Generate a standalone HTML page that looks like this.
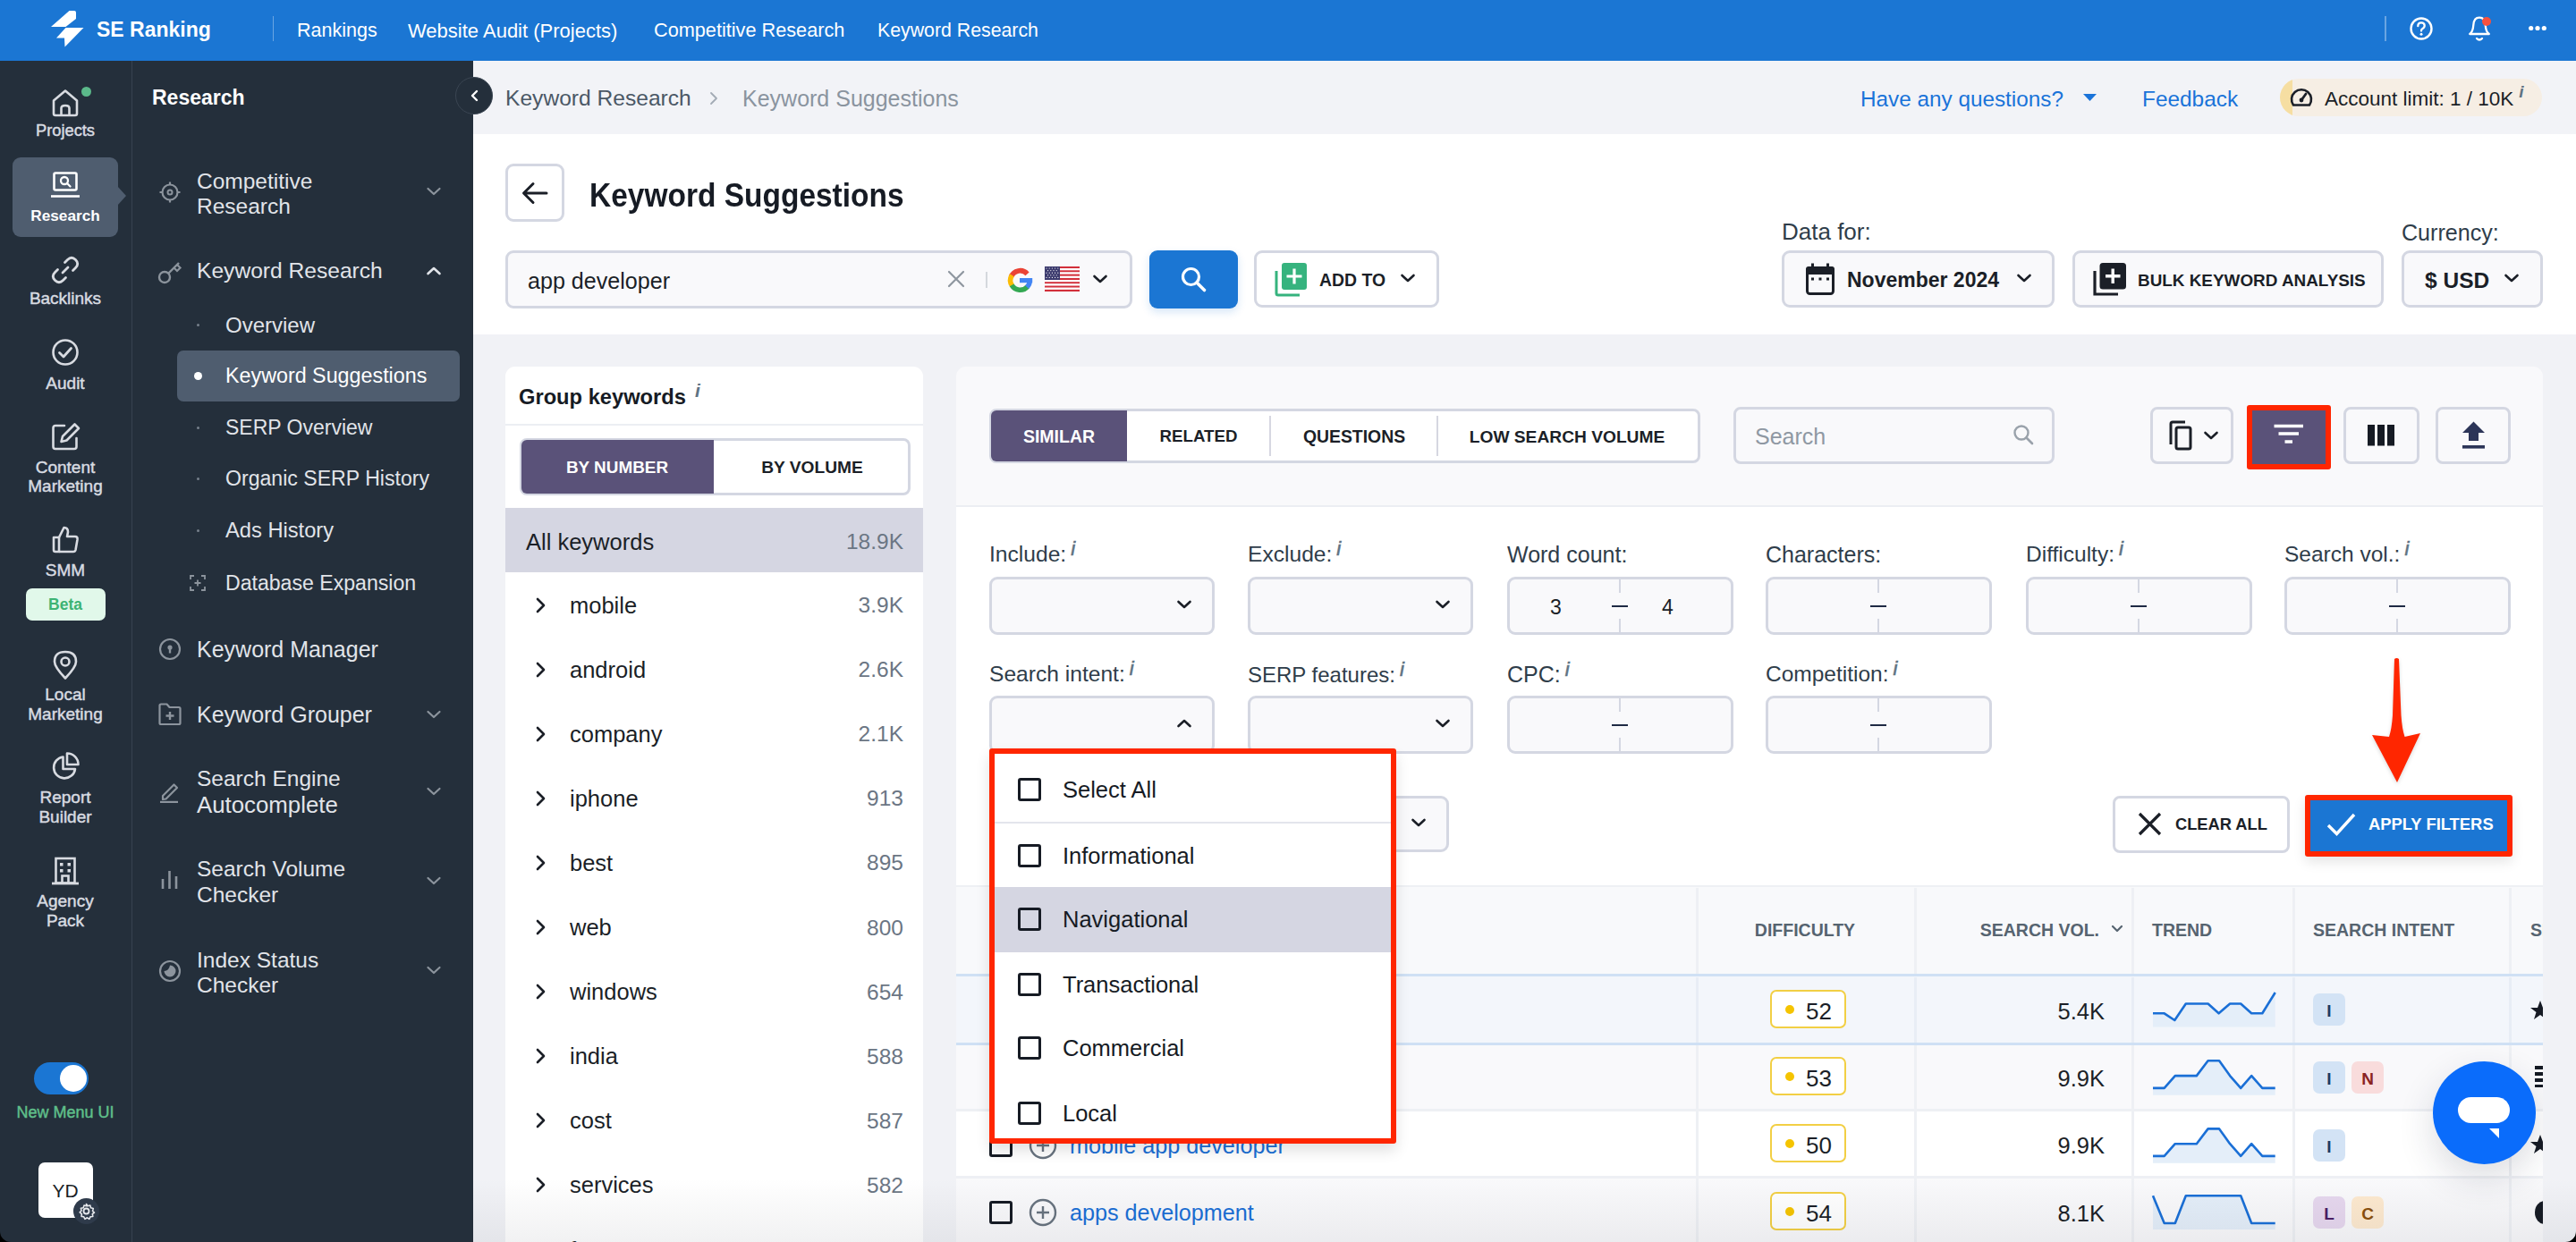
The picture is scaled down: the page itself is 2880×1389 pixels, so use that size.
<!DOCTYPE html>
<html><head><meta charset="utf-8"><title>Keyword Suggestions</title>
<style>
html,body{margin:0;padding:0;}
body{width:2880px;height:1389px;overflow:hidden;position:relative;background:#f1f2f6;font-family:"Liberation Sans", sans-serif;}
.t{position:absolute;white-space:nowrap;font-family:"Liberation Sans", sans-serif;}
.b{position:absolute;box-sizing:border-box;}
</style></head><body>
<div class="b" style="left:0px;top:0px;width:2880px;height:68px;background:#1b76d3;"></div>
<div class="b" style="left:0px;top:68px;width:529px;height:1321px;background:#242f3b;"></div>
<div class="b" style="left:147px;top:68px;width:1px;height:1321px;background:#374250;"></div>
<div class="b" style="left:529px;top:68px;width:2351px;height:82px;background:#f2f3f7;"></div>
<div class="b" style="left:529px;top:150px;width:2351px;height:224px;background:#ffffff;"></div>
<svg class="b" style="left:0px;top:0px;" width="110" height="68" viewBox="0 0 110 68" fill="none"><path d="M77.5 12 L83 12 Q85 12 85 14 L85 21 L73.5 30 L57 30 Z" fill="#fff"/><path d="M73.5 31 L93.5 31 L72.5 52.5 L72 42.5 L63 42.5 Z" fill="#fff"/></svg>
<div class="t" style="left:108px;top:18.0px;font-size:23px;line-height:30px;font-weight:700;color:#ffffff;">SE Ranking</div>
<div class="b" style="left:305px;top:18px;width:1px;height:28px;background:rgba(255,255,255,0.35);"></div>
<div class="t" style="left:332px;top:20.0px;font-size:21.5px;line-height:28px;font-weight:400;color:#ffffff;">Rankings</div>
<div class="t" style="left:456px;top:19.5px;font-size:22px;line-height:29px;font-weight:400;color:#ffffff;">Website Audit (Projects)</div>
<div class="t" style="left:731px;top:20.0px;font-size:21.7px;line-height:28px;font-weight:400;color:#ffffff;">Competitive Research</div>
<div class="t" style="left:981px;top:20.0px;font-size:21.3px;line-height:28px;font-weight:400;color:#ffffff;">Keyword Research</div>
<div class="b" style="left:2666px;top:18px;width:2px;height:28px;background:rgba(255,255,255,0.35);"></div>
<svg class="b" style="left:2691px;top:16px;" width="32" height="32" viewBox="0 0 32 32" fill="none"><circle cx="16" cy="16" r="11.5" stroke="#fff" stroke-width="2.4"/><path d="M12.3 13.2 Q12.3 9.3 16 9.3 Q19.7 9.3 19.7 12.8 Q19.7 15 17.2 16.2 Q16 16.8 16 18.5" stroke="#fff" stroke-width="2.3" stroke-linecap="round"/><circle cx="16" cy="22.3" r="1.5" fill="#fff"/></svg>
<svg class="b" style="left:2754px;top:14px;" width="36" height="36" viewBox="0 0 36 36" fill="none"><path d="M7.2 24 Q10.8 21.5 11.3 14 Q11.8 5.6 18 5.6 Q24.2 5.6 24.7 14 Q25.2 21.5 28.8 24 Z" stroke="#fff" stroke-width="2.3" stroke-linejoin="round"/><path d="M15 29 Q18 32 21 29" stroke="#fff" stroke-width="2.3" stroke-linecap="round"/><circle cx="26" cy="10" r="5" fill="#f6513f"/></svg>
<svg class="b" style="left:2818px;top:24px;" width="36" height="14" viewBox="0 0 36 14" fill="none"><circle cx="11.7" cy="7.5" r="2.6" fill="#fff"/><circle cx="19" cy="7.5" r="2.6" fill="#fff"/><circle cx="26.3" cy="7.5" r="2.6" fill="#fff"/></svg>
<svg class="b" style="left:55px;top:97px;" width="36" height="36" viewBox="0 0 36 36" fill="none"><path d="M5 15.5 L18 4.5 L31 15.5 L31 30 Q31 32 29 32 L7 32 Q5 32 5 30 Z" stroke="#d8dbe1" stroke-width="2.6" stroke-linejoin="round"/><path d="M13.5 32 L13.5 24 Q13.5 21 18 21 Q22.5 21 22.5 24 L22.5 32" stroke="#d8dbe1" stroke-width="2.6"/></svg>
<div class="b" style="left:91px;top:97px;width:11px;height:11px;border-radius:50%;background:#5bb98a;"></div>
<div class="t" style="left:-327px;width:800px;text-align:center;top:134.0px;font-size:18.3px;line-height:24px;font-weight:400;color:#d8dbe1;-webkit-text-stroke:0.45px #d8dbe1;">Projects</div>
<div class="b" style="left:14px;top:176px;width:118px;height:89px;background:#4f5d6f;border-radius:9px;"></div>
<svg class="b" style="left:131px;top:208px;" width="12" height="22" viewBox="0 0 12 22" fill="none"><path d="M0 0 L10 11 L0 22 Z" fill="#4f5d6f"/></svg>
<svg class="b" style="left:55px;top:190px;" width="36" height="36" viewBox="0 0 36 36" fill="none"><rect x="5.5" y="3.5" width="25" height="19" rx="1.5" stroke="#fff" stroke-width="2.6"/><path d="M2 29.5 L34 29.5" stroke="#fff" stroke-width="2.6"/><circle cx="17" cy="12" r="4" stroke="#fff" stroke-width="2.3"/><path d="M20 15 L23.5 18.5" stroke="#fff" stroke-width="2.3" stroke-linecap="round"/></svg>
<div class="t" style="left:-327px;width:800px;text-align:center;top:230.0px;font-size:17.2px;line-height:22px;font-weight:700;color:#ffffff;">Research</div>
<svg class="b" style="left:55px;top:284px;" width="36" height="36" viewBox="0 0 36 36" fill="none"><path d="M15 21 L21 15" stroke="#d8dbe1" stroke-width="2.8" stroke-linecap="round"/><path d="M17.5 9.5 L20.5 6.5 Q25 2 29.5 6.5 Q34 11 29.5 15.5 L26.5 18.5" stroke="#d8dbe1" stroke-width="2.8" stroke-linecap="round"/><path d="M18.5 26.5 L15.5 29.5 Q11 34 6.5 29.5 Q2 25 6.5 20.5 L9.5 17.5" stroke="#d8dbe1" stroke-width="2.8" stroke-linecap="round"/></svg>
<div class="t" style="left:-327px;width:800px;text-align:center;top:320.5px;font-size:19px;line-height:25px;font-weight:400;color:#d8dbe1;-webkit-text-stroke:0.45px #d8dbe1;">Backlinks</div>
<svg class="b" style="left:55px;top:376px;" width="36" height="36" viewBox="0 0 36 36" fill="none"><circle cx="18" cy="18" r="13.5" stroke="#d8dbe1" stroke-width="2.6"/><path d="M11.5 18.5 L16 23 L24.5 13.5" stroke="#d8dbe1" stroke-width="2.8" stroke-linecap="round" stroke-linejoin="round"/></svg>
<div class="t" style="left:-327px;width:800px;text-align:center;top:415.5px;font-size:19px;line-height:25px;font-weight:400;color:#d8dbe1;-webkit-text-stroke:0.45px #d8dbe1;">Audit</div>
<svg class="b" style="left:55px;top:471px;" width="36" height="36" viewBox="0 0 36 36" fill="none"><path d="M17 5 L7 5 Q4.5 5 4.5 7.5 L4.5 28.5 Q4.5 31 7 31 L28 31 Q30.5 31 30.5 28.5 L30.5 19" stroke="#d8dbe1" stroke-width="2.6" stroke-linecap="round"/><path d="M28.5 3.5 L33 8 L19.5 21.5 L13.5 23 L15 17 Z" stroke="#d8dbe1" stroke-width="2.6" stroke-linejoin="round"/></svg>
<div class="t" style="left:-327px;width:800px;text-align:center;top:509.5px;font-size:19px;line-height:25px;font-weight:400;color:#d8dbe1;-webkit-text-stroke:0.45px #d8dbe1;">Content</div>
<div class="t" style="left:-327px;width:800px;text-align:center;top:530.5px;font-size:19px;line-height:25px;font-weight:400;color:#d8dbe1;-webkit-text-stroke:0.45px #d8dbe1;">Marketing</div>
<svg class="b" style="left:55px;top:586px;" width="36" height="36" viewBox="0 0 36 36" fill="none"><path d="M5 15 L11 15 L11 31 L7 31 Q5 31 5 29 Z" stroke="#d8dbe1" stroke-width="2.6" stroke-linejoin="round"/><path d="M11 15 L16.5 4 Q21 4 21 9 L20 14 L29 14 Q32 14 31.5 17.5 L29.5 29 Q29 31 27 31 L11 31" stroke="#d8dbe1" stroke-width="2.6" stroke-linejoin="round"/></svg>
<div class="t" style="left:-327px;width:800px;text-align:center;top:624.5px;font-size:19px;line-height:25px;font-weight:400;color:#d8dbe1;-webkit-text-stroke:0.45px #d8dbe1;">SMM</div>
<div class="b" style="left:29px;top:658px;width:89px;height:36px;background:#e1f8ea;border-radius:7px;"></div>
<div class="t" style="left:-327px;width:800px;text-align:center;top:664.5px;font-size:17.5px;line-height:23px;font-weight:700;color:#3db374;">Beta</div>
<svg class="b" style="left:55px;top:726px;" width="36" height="36" viewBox="0 0 36 36" fill="none"><path d="M18 32.5 Q6 20 6 14 Q6 3 18 3 Q30 3 30 14 Q30 20 18 32.5 Z" stroke="#d8dbe1" stroke-width="2.6" stroke-linejoin="round"/><circle cx="18" cy="14" r="4.5" stroke="#d8dbe1" stroke-width="2.6"/></svg>
<div class="t" style="left:-327px;width:800px;text-align:center;top:763.5px;font-size:19px;line-height:25px;font-weight:400;color:#d8dbe1;-webkit-text-stroke:0.45px #d8dbe1;">Local</div>
<div class="t" style="left:-327px;width:800px;text-align:center;top:785.5px;font-size:19px;line-height:25px;font-weight:400;color:#d8dbe1;-webkit-text-stroke:0.45px #d8dbe1;">Marketing</div>
<svg class="b" style="left:55px;top:840px;" width="36" height="36" viewBox="0 0 36 36" fill="none"><path d="M15.5 6.5 A12 12 0 1 0 29 20 L15.5 20 Z" stroke="#d8dbe1" stroke-width="2.6" stroke-linejoin="round"/><path d="M20 2.5 A12.5 12.5 0 0 1 32.5 15 L20 15 Z" stroke="#d8dbe1" stroke-width="2.6" stroke-linejoin="round"/></svg>
<div class="t" style="left:-327px;width:800px;text-align:center;top:878.5px;font-size:19px;line-height:25px;font-weight:400;color:#d8dbe1;-webkit-text-stroke:0.45px #d8dbe1;">Report</div>
<div class="t" style="left:-327px;width:800px;text-align:center;top:900.5px;font-size:19px;line-height:25px;font-weight:400;color:#d8dbe1;-webkit-text-stroke:0.45px #d8dbe1;">Builder</div>
<svg class="b" style="left:55px;top:957px;" width="36" height="36" viewBox="0 0 36 36" fill="none"><rect x="7.5" y="3" width="21" height="27.5" stroke="#d8dbe1" stroke-width="2.6"/><path d="M3 31 L33 31" stroke="#d8dbe1" stroke-width="2.8"/><rect x="12" y="8" width="3.5" height="3.5" fill="#d8dbe1"/><rect x="20.5" y="8" width="3.5" height="3.5" fill="#d8dbe1"/><rect x="12" y="15" width="3.5" height="3.5" fill="#d8dbe1"/><rect x="20.5" y="15" width="3.5" height="3.5" fill="#d8dbe1"/><path d="M14.5 31 L14.5 22.5 L21.5 22.5 L21.5 31" stroke="#d8dbe1" stroke-width="2.6"/></svg>
<div class="t" style="left:-327px;width:800px;text-align:center;top:994.5px;font-size:19px;line-height:25px;font-weight:400;color:#d8dbe1;-webkit-text-stroke:0.45px #d8dbe1;">Agency</div>
<div class="t" style="left:-327px;width:800px;text-align:center;top:1016.5px;font-size:19px;line-height:25px;font-weight:400;color:#d8dbe1;-webkit-text-stroke:0.45px #d8dbe1;">Pack</div>
<div class="b" style="left:38px;top:1188px;width:61px;height:36px;background:#1b76d3;border-radius:18px;"></div>
<div class="b" style="left:67px;top:1191px;width:30px;height:30px;border-radius:50%;background:#fff;"></div>
<div class="t" style="left:-327px;width:800px;text-align:center;top:1232.5px;font-size:18px;line-height:23px;font-weight:400;color:#5fbf8a;-webkit-text-stroke:0.45px #5fbf8a;">New Menu UI</div>
<div class="b" style="left:43px;top:1300px;width:61px;height:62px;background:#fff;border-radius:7px;"></div>
<div class="t" style="left:-327px;width:800px;text-align:center;top:1317.5px;font-size:21px;line-height:27px;font-weight:400;color:#1b1f27;">YD</div>
<div class="b" style="left:82px;top:1340px;width:29px;height:29px;border-radius:50%;background:#2f3b4b;"></div>
<svg class="b" style="left:86px;top:1344px;" width="21" height="21" viewBox="0 0 21 21" fill="none"><circle cx="10.5" cy="10.5" r="3" stroke="#e6e8ec" stroke-width="1.8"/><path d="M10.5 2.5 L12 4.8 L14.8 4 L15.5 6.8 L18.3 7.5 L17.5 10.3 L19.5 12 L17.3 13.7 L17.8 16.5 L15 16.8 L13.8 19.3 L11.5 17.8 L9 19.3 L7.7 16.8 L5 16.4 L5.4 13.6 L3.2 11.8 L5 10 L4.4 7.3 L7.2 6.7 L8 4 L10.7 4.7 Z" stroke="#e6e8ec" stroke-width="1.6" stroke-linejoin="round"/></svg>
<div class="t" style="left:170px;top:94.0px;font-size:23px;line-height:30px;font-weight:700;color:#ffffff;">Research</div>
<div class="b" style="left:509px;top:86px;width:42px;height:42px;border-radius:50%;background:#242f3b;border:1px solid #3a4552;"></div>
<svg class="b" style="left:521px;top:97px;" width="20" height="20" viewBox="0 0 20 20" fill="none"><path d="M12 5 L7 10 L12 15" stroke="#fff" stroke-width="2.4" stroke-linecap="round" stroke-linejoin="round"/></svg>
<svg class="b" style="left:177px;top:202px;" width="26" height="26" viewBox="0 0 26 26" fill="none"><circle cx="13" cy="13" r="8.5" stroke="#8c949d" stroke-width="2.2"/><circle cx="13" cy="13" r="2.5" stroke="#8c949d" stroke-width="2"/><path d="M13 1.5 L13 4.5 M13 21.5 L13 24.5 M1.5 13 L4.5 13 M21.5 13 L24.5 13" stroke="#8c949d" stroke-width="2.2"/></svg>
<div class="t" style="left:220px;top:187.0px;font-size:24.5px;line-height:32px;font-weight:400;color:#e1e4e9;">Competitive</div>
<div class="t" style="left:220px;top:215.0px;font-size:24.5px;line-height:32px;font-weight:400;color:#e1e4e9;">Research</div>
<svg class="b" style="left:476px;top:208px;" width="18" height="12" viewBox="0 0 18 12" fill="none"><path d="M2.5 3 L9 9 L15.5 3" stroke="#8c949d" stroke-width="2.2" stroke-linecap="round" stroke-linejoin="round"/></svg>
<svg class="b" style="left:175px;top:289px;" width="30" height="30" viewBox="0 0 30 30" fill="none"><circle cx="9" cy="21" r="6" stroke="#8c949d" stroke-width="2.4"/><path d="M13.5 16.5 L25 5" stroke="#8c949d" stroke-width="2.4"/><path d="M19.5 10.5 L23 14 L26.5 10.5 L23 7" stroke="#8c949d" stroke-width="2.2"/></svg>
<div class="t" style="left:220px;top:287.0px;font-size:24.6px;line-height:32px;font-weight:400;color:#e1e4e9;">Keyword Research</div>
<svg class="b" style="left:476px;top:297px;" width="18" height="12" viewBox="0 0 18 12" fill="none"><path d="M2.5 9 L9 3 L15.5 9" stroke="#e1e4e9" stroke-width="2.6" stroke-linecap="round" stroke-linejoin="round"/></svg>
<div class="b" style="left:220px;top:361.5px;width:3px;height:3px;border-radius:50%;background:#77818c;"></div>
<div class="t" style="left:252px;top:347.5px;font-size:24px;line-height:31px;font-weight:400;color:#e1e4e9;">Overview</div>
<div class="b" style="left:220px;top:476.5px;width:3px;height:3px;border-radius:50%;background:#77818c;"></div>
<div class="t" style="left:252px;top:463.0px;font-size:23px;line-height:30px;font-weight:400;color:#e1e4e9;">SERP Overview</div>
<div class="b" style="left:220px;top:533.5px;width:3px;height:3px;border-radius:50%;background:#77818c;"></div>
<div class="t" style="left:252px;top:520.0px;font-size:23.1px;line-height:30px;font-weight:400;color:#e1e4e9;">Organic SERP History</div>
<div class="b" style="left:220px;top:591.5px;width:3px;height:3px;border-radius:50%;background:#77818c;"></div>
<div class="t" style="left:252px;top:577.5px;font-size:23.7px;line-height:31px;font-weight:400;color:#e1e4e9;">Ads History</div>
<div class="b" style="left:198px;top:392px;width:316px;height:57px;background:#4f5d6f;border-radius:7px;"></div>
<div class="b" style="left:217px;top:416px;width:9px;height:9px;border-radius:50%;background:#fff;"></div>
<div class="t" style="left:252px;top:405.0px;font-size:23.3px;line-height:30px;font-weight:400;color:#ffffff;">Keyword Suggestions</div>
<svg class="b" style="left:211px;top:642px;" width="20" height="20" viewBox="0 0 20 20" fill="none"><path d="M2 6 L2 2 L6 2 M14 2 L18 2 L18 6 M18 14 L18 18 L14 18 M6 18 L2 18 L2 14" stroke="#8c949d" stroke-width="1.8"/><path d="M10 6.5 L10 13.5 M6.5 10 L13.5 10" stroke="#8c949d" stroke-width="1.8"/></svg>
<div class="t" style="left:252px;top:637.0px;font-size:23.1px;line-height:30px;font-weight:400;color:#e1e4e9;">Database Expansion</div>
<svg class="b" style="left:177px;top:713px;" width="26" height="26" viewBox="0 0 26 26" fill="none"><circle cx="13" cy="13" r="11" stroke="#8c949d" stroke-width="2.2"/><circle cx="13" cy="11" r="2.6" fill="#8c949d"/><path d="M13 11 L13 17.5" stroke="#8c949d" stroke-width="2.4"/></svg>
<div class="t" style="left:220px;top:710.0px;font-size:25px;line-height:32px;font-weight:400;color:#e1e4e9;">Keyword Manager</div>
<svg class="b" style="left:176px;top:785px;" width="28" height="28" viewBox="0 0 28 28" fill="none"><path d="M2.5 4 Q2.5 2.5 4 2.5 L10.5 2.5 L13.5 6 L24 6 Q25.5 6 25.5 7.5 L25.5 23.5 Q25.5 25 24 25 L4 25 Q2.5 25 2.5 23.5 Z" stroke="#8c949d" stroke-width="2.2" stroke-linejoin="round"/><path d="M14 11 L14 20 M9.5 15.5 L18.5 15.5" stroke="#8c949d" stroke-width="2.4"/></svg>
<div class="t" style="left:220px;top:783.0px;font-size:25px;line-height:32px;font-weight:400;color:#e1e4e9;">Keyword Grouper</div>
<svg class="b" style="left:476px;top:793px;" width="18" height="12" viewBox="0 0 18 12" fill="none"><path d="M2.5 3 L9 9 L15.5 3" stroke="#8c949d" stroke-width="2.2" stroke-linecap="round" stroke-linejoin="round"/></svg>
<svg class="b" style="left:177px;top:872px;" width="26" height="26" viewBox="0 0 26 26" fill="none"><path d="M5 18 L17.5 5.5 L21 9 L8.5 21.5 L5 22 Z" stroke="#8c949d" stroke-width="2.2" stroke-linejoin="round"/><path d="M2 25 L22 25" stroke="#8c949d" stroke-width="2.4"/></svg>
<div class="t" style="left:220px;top:855.0px;font-size:24.5px;line-height:32px;font-weight:400;color:#e1e4e9;">Search Engine</div>
<div class="t" style="left:220px;top:883.0px;font-size:25.8px;line-height:34px;font-weight:400;color:#e1e4e9;">Autocomplete</div>
<svg class="b" style="left:476px;top:879px;" width="18" height="12" viewBox="0 0 18 12" fill="none"><path d="M2.5 3 L9 9 L15.5 3" stroke="#8c949d" stroke-width="2.2" stroke-linecap="round" stroke-linejoin="round"/></svg>
<svg class="b" style="left:178px;top:972px;" width="24" height="26" viewBox="0 0 24 26" fill="none"><path d="M4 11 L4 22 M11.5 2 L11.5 22 M19 8 L19 22" stroke="#8c949d" stroke-width="2.6"/></svg>
<div class="t" style="left:220px;top:956.0px;font-size:24.5px;line-height:32px;font-weight:400;color:#e1e4e9;">Search Volume</div>
<div class="t" style="left:220px;top:985.0px;font-size:24.5px;line-height:32px;font-weight:400;color:#e1e4e9;">Checker</div>
<svg class="b" style="left:476px;top:979px;" width="18" height="12" viewBox="0 0 18 12" fill="none"><path d="M2.5 3 L9 9 L15.5 3" stroke="#8c949d" stroke-width="2.2" stroke-linecap="round" stroke-linejoin="round"/></svg>
<svg class="b" style="left:177px;top:1073px;" width="26" height="26" viewBox="0 0 26 26" fill="none"><circle cx="13" cy="13" r="11" stroke="#8c949d" stroke-width="2.2"/><path d="M13 6.5 A6.5 6.5 0 1 1 6.5 13 Q12 12.5 13 6.5 Z" fill="#8c949d"/></svg>
<div class="t" style="left:220px;top:1058.0px;font-size:24.5px;line-height:32px;font-weight:400;color:#e1e4e9;">Index Status</div>
<div class="t" style="left:220px;top:1086.0px;font-size:24.5px;line-height:32px;font-weight:400;color:#e1e4e9;">Checker</div>
<svg class="b" style="left:476px;top:1079px;" width="18" height="12" viewBox="0 0 18 12" fill="none"><path d="M2.5 3 L9 9 L15.5 3" stroke="#8c949d" stroke-width="2.2" stroke-linecap="round" stroke-linejoin="round"/></svg>
<div class="t" style="left:565px;top:94.0px;font-size:24.6px;line-height:32px;font-weight:400;color:#4b5866;">Keyword Research</div>
<svg class="b" style="left:790px;top:100px;" width="16" height="20" viewBox="0 0 16 20" fill="none"><path d="M5 4 L11 10 L5 16" stroke="#a3abb5" stroke-width="1.8" stroke-linecap="round" stroke-linejoin="round"/></svg>
<div class="t" style="left:830px;top:94.0px;font-size:25px;line-height:32px;font-weight:400;color:#8a949f;">Keyword Suggestions</div>
<div class="t" style="left:2080px;top:95.0px;font-size:24.3px;line-height:32px;font-weight:400;color:#1a73d9;">Have any questions?</div>
<svg class="b" style="left:2327px;top:103px;" width="20" height="12" viewBox="0 0 20 12" fill="none"><path d="M2 2 L17 2 L9.5 10 Z" fill="#1a73d9"/></svg>
<div class="t" style="left:2395px;top:95.0px;font-size:24.4px;line-height:32px;font-weight:400;color:#1a73d9;">Feedback</div>
<div class="b" style="left:2549px;top:88px;width:293px;height:42px;background:#f6eee4;border-radius:21px;overflow:hidden;"></div>
<div class="b" style="left:2549px;top:88px;width:42px;height:42px;border-radius:21px 0 0 21px;clip-path:inset(0 28px 0 0);background:#f6dea2;"></div>
<svg class="b" style="left:2558px;top:93px;" width="30" height="30" viewBox="0 0 30 30" fill="none"><path d="M6 24.5 A11 11 0 1 1 24 24.5 Z" stroke="#1b1f27" stroke-width="2.6" stroke-linejoin="round"/><path d="M15 19 L20 12" stroke="#1b1f27" stroke-width="2.8" stroke-linecap="round"/><circle cx="15" cy="19" r="2.4" fill="#1b1f27"/></svg>
<div class="t" style="left:2599px;top:95.5px;font-size:22.5px;line-height:29px;font-weight:400;color:#1b1f27;">Account limit: 1 / 10K<span style="font-style:italic;font-weight:700;color:#5f7383;font-size:19px;position:relative;top:-9px;margin-left:6px;">i</span></div>
<div class="b" style="left:565px;top:183px;width:66px;height:65px;border:3px solid #d4d7e2;border-radius:9px;background:#fff;"></div>
<svg class="b" style="left:581px;top:199px;" width="34" height="34" viewBox="0 0 34 34" fill="none"><path d="M30 17 L5 17 M15 6.5 L4.5 17 L15 27.5" stroke="#1b1f27" stroke-width="3" stroke-linecap="round" stroke-linejoin="round"/></svg>
<div class="t" style="left:659px;top:194.5px;font-size:36px;line-height:47px;font-weight:700;color:#161b24;transform:scaleX(0.93);transform-origin:0 50%;">Keyword Suggestions</div>
<div class="b" style="left:565px;top:280px;width:701px;height:65px;border:3px solid #d4d7e2;border-radius:9px;background:#f9f9fb;"></div>
<div class="t" style="left:590px;top:297.5px;font-size:25.1px;line-height:33px;font-weight:400;color:#1b1f27;">app developer</div>
<svg class="b" style="left:1058px;top:301px;" width="22" height="22" viewBox="0 0 22 22" fill="none"><path d="M3 3 L19 19 M19 3 L3 19" stroke="#8e969f" stroke-width="2.2" stroke-linecap="round"/></svg>
<div class="b" style="left:1102px;top:304px;width:2px;height:18px;background:#d5d8dd;"></div>
<svg class="b" style="left:1124px;top:297px;" width="33" height="33" viewBox="0 0 33 33" fill="none"><path d="M6.35 12.81 A10.8 10.8 0 0 1 24.53 9.27" stroke="#ea4335" stroke-width="5.6"/><path d="M7.65 22.69 A10.8 10.8 0 0 1 7.34 10.78" stroke="#fbbc05" stroke-width="5.6"/><path d="M24.77 23.44 A10.8 10.8 0 0 1 7.15 21.90" stroke="#34a853" stroke-width="5.6"/><path d="M27.30 16.50 A10.8 10.8 0 0 1 24.14 24.14" stroke="#4285f4" stroke-width="5.6"/><rect x="16" y="14" width="14.2" height="5.2" fill="#4285f4"/></svg>
<svg class="b" style="left:1168px;top:298px;" width="39" height="28" viewBox="0 0 39 28" fill="none"><rect x="0" y="0.00" width="39" height="2.20" fill="#d22f3a"/><rect x="0" y="2.15" width="39" height="2.20" fill="#fff"/><rect x="0" y="4.31" width="39" height="2.20" fill="#d22f3a"/><rect x="0" y="6.46" width="39" height="2.20" fill="#fff"/><rect x="0" y="8.62" width="39" height="2.20" fill="#d22f3a"/><rect x="0" y="10.77" width="39" height="2.20" fill="#fff"/><rect x="0" y="12.92" width="39" height="2.20" fill="#d22f3a"/><rect x="0" y="15.08" width="39" height="2.20" fill="#fff"/><rect x="0" y="17.23" width="39" height="2.20" fill="#d22f3a"/><rect x="0" y="19.38" width="39" height="2.20" fill="#fff"/><rect x="0" y="21.54" width="39" height="2.20" fill="#d22f3a"/><rect x="0" y="23.69" width="39" height="2.20" fill="#fff"/><rect x="0" y="25.85" width="39" height="2.20" fill="#d22f3a"/><rect x="0" y="0" width="17" height="15" fill="#3c3b6e"/><circle cx="2.0" cy="2.0" r="0.6" fill="#fff"/><circle cx="5.2" cy="2.0" r="0.6" fill="#fff"/><circle cx="8.4" cy="2.0" r="0.6" fill="#fff"/><circle cx="11.6" cy="2.0" r="0.6" fill="#fff"/><circle cx="14.8" cy="2.0" r="0.6" fill="#fff"/><circle cx="3.6" cy="4.6" r="0.6" fill="#fff"/><circle cx="6.8" cy="4.6" r="0.6" fill="#fff"/><circle cx="10.0" cy="4.6" r="0.6" fill="#fff"/><circle cx="13.2" cy="4.6" r="0.6" fill="#fff"/><circle cx="2.0" cy="7.2" r="0.6" fill="#fff"/><circle cx="5.2" cy="7.2" r="0.6" fill="#fff"/><circle cx="8.4" cy="7.2" r="0.6" fill="#fff"/><circle cx="11.6" cy="7.2" r="0.6" fill="#fff"/><circle cx="14.8" cy="7.2" r="0.6" fill="#fff"/><circle cx="3.6" cy="9.8" r="0.6" fill="#fff"/><circle cx="6.8" cy="9.8" r="0.6" fill="#fff"/><circle cx="10.0" cy="9.8" r="0.6" fill="#fff"/><circle cx="13.2" cy="9.8" r="0.6" fill="#fff"/><circle cx="2.0" cy="12.4" r="0.6" fill="#fff"/><circle cx="5.2" cy="12.4" r="0.6" fill="#fff"/><circle cx="8.4" cy="12.4" r="0.6" fill="#fff"/><circle cx="11.6" cy="12.4" r="0.6" fill="#fff"/><circle cx="14.8" cy="12.4" r="0.6" fill="#fff"/></svg>
<svg class="b" style="left:1221px;top:306px;" width="18" height="12" viewBox="0 0 18 12" fill="none"><path d="M2.5 3 L9 9 L15.5 3" stroke="#1b1f27" stroke-width="2.6" stroke-linecap="round" stroke-linejoin="round"/></svg>
<div class="b" style="left:1285px;top:280px;width:99px;height:65px;background:#1b76d3;border-radius:9px;box-shadow:0 4px 10px rgba(27,118,211,0.18);"></div>
<svg class="b" style="left:1317px;top:295px;" width="36" height="36" viewBox="0 0 36 36" fill="none"><circle cx="14.5" cy="14.5" r="9" stroke="#fff" stroke-width="3.2"/><path d="M21 21 L29.5 29.5" stroke="#fff" stroke-width="3.6" stroke-linecap="round"/></svg>
<div class="b" style="left:1402px;top:280px;width:207px;height:64px;border:3px solid #d4d7e2;border-radius:9px;background:#fff;"></div>
<svg class="b" style="left:1424px;top:291px;" width="40" height="42" viewBox="0 0 40 42" fill="none"><path d="M3 12 L3 37 Q3 39 5 39 L29 39" stroke="#36b37e" stroke-width="3"/><rect x="9" y="3" width="28" height="30" rx="3" fill="#36b37e"/><path d="M23 9.5 L23 26.5 M14.5 18 L31.5 18" stroke="#fff" stroke-width="3.2"/></svg>
<div class="t" style="left:1475px;top:300.5px;font-size:19.4px;line-height:25px;font-weight:700;color:#1b1f27;">ADD TO</div>
<svg class="b" style="left:1565px;top:305px;" width="18" height="12" viewBox="0 0 18 12" fill="none"><path d="M2.5 3 L9 9 L15.5 3" stroke="#1b1f27" stroke-width="2.6" stroke-linecap="round" stroke-linejoin="round"/></svg>
<div class="t" style="left:1992px;top:242.0px;font-size:26px;line-height:34px;font-weight:400;color:#2f3d4a;">Data for:</div>
<div class="b" style="left:1992px;top:280px;width:305px;height:64px;border:3px solid #d4d7e2;border-radius:9px;background:#f9f9fb;"></div>
<svg class="b" style="left:2015px;top:293px;" width="38" height="38" viewBox="0 0 38 38" fill="none"><rect x="5.5" y="6.5" width="29" height="29" rx="3" stroke="#1b1f27" stroke-width="3"/><path d="M4 14 L4 8 Q4 5 7 5 L33 5 Q36 5 36 8 L36 14 Z" fill="#1b1f27"/><rect x="10" y="1.5" width="3" height="5" fill="#1b1f27"/><rect x="27" y="1.5" width="3" height="5" fill="#1b1f27"/><rect x="10" y="17.5" width="3" height="3" fill="#1b1f27"/><rect x="18.5" y="17.5" width="3" height="3" fill="#1b1f27"/><rect x="27" y="17.5" width="3" height="3" fill="#1b1f27"/></svg>
<div class="t" style="left:2065px;top:298.0px;font-size:23px;line-height:30px;font-weight:700;color:#1b1f27;">November 2024</div>
<svg class="b" style="left:2254px;top:305px;" width="18" height="12" viewBox="0 0 18 12" fill="none"><path d="M2.5 3 L9 9 L15.5 3" stroke="#1b1f27" stroke-width="2.6" stroke-linecap="round" stroke-linejoin="round"/></svg>
<div class="b" style="left:2317px;top:280px;width:348px;height:64px;border:3px solid #d4d7e2;border-radius:9px;background:#f9f9fb;"></div>
<svg class="b" style="left:2339px;top:292px;" width="40" height="40" viewBox="0 0 40 40" fill="none"><path d="M3 11 L3 37 L29 37" stroke="#1b1f27" stroke-width="3.2"/><rect x="8.5" y="2" width="29.5" height="29.5" rx="3.5" fill="#1b1f27"/><path d="M23.2 8.5 L23.2 25 M15 16.7 L31.5 16.7" stroke="#fff" stroke-width="3.4"/></svg>
<div class="t" style="left:2390px;top:300.5px;font-size:18.9px;line-height:25px;font-weight:700;color:#1b1f27;">BULK KEYWORD ANALYSIS</div>
<div class="t" style="left:2685px;top:243.5px;font-size:25.1px;line-height:33px;font-weight:400;color:#2f3d4a;">Currency:</div>
<div class="b" style="left:2685px;top:280px;width:158px;height:64px;border:3px solid #d4d7e2;border-radius:9px;background:#f9f9fb;"></div>
<div class="t" style="left:2711px;top:298.0px;font-size:24.5px;line-height:32px;font-weight:700;color:#1b1f27;">$ USD</div>
<svg class="b" style="left:2799px;top:305px;" width="18" height="12" viewBox="0 0 18 12" fill="none"><path d="M2.5 3 L9 9 L15.5 3" stroke="#1b1f27" stroke-width="2.6" stroke-linecap="round" stroke-linejoin="round"/></svg>
<div class="b" style="left:565px;top:410px;width:467px;height:990px;background:#fff;border-radius:11px 11px 0 0;"></div>
<div class="t" style="left:580px;top:428.5px;font-size:23.7px;line-height:31px;font-weight:700;color:#161b24;">Group keywords</div>
<div class="t" style="left:777px;top:422.5px;font-size:21px;line-height:27px;font-weight:700;color:#5f7383;font-style:italic;">i</div>
<div class="b" style="left:565px;top:474px;width:467px;height:2px;background:#eceef3;"></div>
<div class="b" style="left:581px;top:490px;width:437px;height:64px;border:3px solid #d4d7e2;border-radius:8px;background:#fff;"></div>
<div class="b" style="left:583px;top:492px;width:215px;height:60px;background:#5a5279;border-radius:6px 0 0 6px;"></div>
<div class="t" style="left:290px;width:800px;text-align:center;top:509.5px;font-size:18.9px;line-height:25px;font-weight:700;color:#ffffff;">BY NUMBER</div>
<div class="t" style="left:508px;width:800px;text-align:center;top:509.5px;font-size:19.2px;line-height:25px;font-weight:700;color:#1b1f27;">BY VOLUME</div>
<div class="b" style="left:565px;top:568px;width:467px;height:72px;background:#d5d6e2;"></div>
<div class="t" style="left:588px;top:589.5px;font-size:25.5px;line-height:33px;font-weight:400;color:#1b1f27;">All keywords</div>
<div class="t" style="right:1870px;top:590.0px;font-size:24.5px;line-height:32px;font-weight:400;color:#6b7684;">18.9K</div>
<svg class="b" style="left:596px;top:667px;" width="18" height="20" viewBox="0 0 18 20" fill="none"><path d="M5 3 L12 10 L5 17" stroke="#1b1f27" stroke-width="2.6" stroke-linecap="round" stroke-linejoin="round"/></svg>
<div class="t" style="left:637px;top:660.5px;font-size:25.5px;line-height:33px;font-weight:400;color:#1b1f27;">mobile</div>
<div class="t" style="right:1870px;top:661.0px;font-size:24.5px;line-height:32px;font-weight:400;color:#6b7684;">3.9K</div>
<svg class="b" style="left:596px;top:739px;" width="18" height="20" viewBox="0 0 18 20" fill="none"><path d="M5 3 L12 10 L5 17" stroke="#1b1f27" stroke-width="2.6" stroke-linecap="round" stroke-linejoin="round"/></svg>
<div class="t" style="left:637px;top:732.6px;font-size:25.5px;line-height:33px;font-weight:400;color:#1b1f27;">android</div>
<div class="t" style="right:1870px;top:733.1px;font-size:24.5px;line-height:32px;font-weight:400;color:#6b7684;">2.6K</div>
<svg class="b" style="left:596px;top:811px;" width="18" height="20" viewBox="0 0 18 20" fill="none"><path d="M5 3 L12 10 L5 17" stroke="#1b1f27" stroke-width="2.6" stroke-linecap="round" stroke-linejoin="round"/></svg>
<div class="t" style="left:637px;top:804.7px;font-size:25.5px;line-height:33px;font-weight:400;color:#1b1f27;">company</div>
<div class="t" style="right:1870px;top:805.2px;font-size:24.5px;line-height:32px;font-weight:400;color:#6b7684;">2.1K</div>
<svg class="b" style="left:596px;top:883px;" width="18" height="20" viewBox="0 0 18 20" fill="none"><path d="M5 3 L12 10 L5 17" stroke="#1b1f27" stroke-width="2.6" stroke-linecap="round" stroke-linejoin="round"/></svg>
<div class="t" style="left:637px;top:876.8px;font-size:25.5px;line-height:33px;font-weight:400;color:#1b1f27;">iphone</div>
<div class="t" style="right:1870px;top:877.3px;font-size:24.5px;line-height:32px;font-weight:400;color:#6b7684;">913</div>
<svg class="b" style="left:596px;top:955px;" width="18" height="20" viewBox="0 0 18 20" fill="none"><path d="M5 3 L12 10 L5 17" stroke="#1b1f27" stroke-width="2.6" stroke-linecap="round" stroke-linejoin="round"/></svg>
<div class="t" style="left:637px;top:948.9px;font-size:25.5px;line-height:33px;font-weight:400;color:#1b1f27;">best</div>
<div class="t" style="right:1870px;top:949.4px;font-size:24.5px;line-height:32px;font-weight:400;color:#6b7684;">895</div>
<svg class="b" style="left:596px;top:1027px;" width="18" height="20" viewBox="0 0 18 20" fill="none"><path d="M5 3 L12 10 L5 17" stroke="#1b1f27" stroke-width="2.6" stroke-linecap="round" stroke-linejoin="round"/></svg>
<div class="t" style="left:637px;top:1021.0px;font-size:25.5px;line-height:33px;font-weight:400;color:#1b1f27;">web</div>
<div class="t" style="right:1870px;top:1021.5px;font-size:24.5px;line-height:32px;font-weight:400;color:#6b7684;">800</div>
<svg class="b" style="left:596px;top:1099px;" width="18" height="20" viewBox="0 0 18 20" fill="none"><path d="M5 3 L12 10 L5 17" stroke="#1b1f27" stroke-width="2.6" stroke-linecap="round" stroke-linejoin="round"/></svg>
<div class="t" style="left:637px;top:1093.1px;font-size:25.5px;line-height:33px;font-weight:400;color:#1b1f27;">windows</div>
<div class="t" style="right:1870px;top:1093.6px;font-size:24.5px;line-height:32px;font-weight:400;color:#6b7684;">654</div>
<svg class="b" style="left:596px;top:1171px;" width="18" height="20" viewBox="0 0 18 20" fill="none"><path d="M5 3 L12 10 L5 17" stroke="#1b1f27" stroke-width="2.6" stroke-linecap="round" stroke-linejoin="round"/></svg>
<div class="t" style="left:637px;top:1165.2px;font-size:25.5px;line-height:33px;font-weight:400;color:#1b1f27;">india</div>
<div class="t" style="right:1870px;top:1165.7px;font-size:24.5px;line-height:32px;font-weight:400;color:#6b7684;">588</div>
<svg class="b" style="left:596px;top:1243px;" width="18" height="20" viewBox="0 0 18 20" fill="none"><path d="M5 3 L12 10 L5 17" stroke="#1b1f27" stroke-width="2.6" stroke-linecap="round" stroke-linejoin="round"/></svg>
<div class="t" style="left:637px;top:1237.3px;font-size:25.5px;line-height:33px;font-weight:400;color:#1b1f27;">cost</div>
<div class="t" style="right:1870px;top:1237.8px;font-size:24.5px;line-height:32px;font-weight:400;color:#6b7684;">587</div>
<svg class="b" style="left:596px;top:1315px;" width="18" height="20" viewBox="0 0 18 20" fill="none"><path d="M5 3 L12 10 L5 17" stroke="#1b1f27" stroke-width="2.6" stroke-linecap="round" stroke-linejoin="round"/></svg>
<div class="t" style="left:637px;top:1309.4px;font-size:25.5px;line-height:33px;font-weight:400;color:#1b1f27;">services</div>
<div class="t" style="right:1870px;top:1309.9px;font-size:24.5px;line-height:32px;font-weight:400;color:#6b7684;">582</div>
<svg class="b" style="left:596px;top:1388px;" width="18" height="20" viewBox="0 0 18 20" fill="none"><path d="M5 3 L12 10 L5 17" stroke="#1b1f27" stroke-width="2.6" stroke-linecap="round" stroke-linejoin="round"/></svg>
<div class="t" style="left:637px;top:1381.5px;font-size:25.5px;line-height:33px;font-weight:400;color:#1b1f27;">free</div>
<div class="t" style="right:1870px;top:1382.0px;font-size:24.5px;line-height:32px;font-weight:400;color:#6b7684;">571</div>
<div class="b" style="left:1069px;top:410px;width:1774px;height:990px;background:#f9f9fb;border-radius:11px 11px 0 0;overflow:hidden;"></div>
<div class="b" style="left:1069px;top:565px;width:1774px;height:425px;background:#ffffff;border-top:2px solid #eceef3;"></div>
<div class="b" style="left:1106px;top:457px;width:795px;height:61px;border:3px solid #d4d7e2;border-radius:8px;background:#fff;"></div>
<div class="b" style="left:1108px;top:459px;width:152px;height:57px;background:#5a5279;border-radius:6px 0 0 6px;"></div>
<div class="t" style="left:784px;width:800px;text-align:center;top:475.5px;font-size:19.5px;line-height:25px;font-weight:700;color:#ffffff;">SIMILAR</div>
<div class="t" style="left:940px;width:800px;text-align:center;top:476.0px;font-size:18.7px;line-height:24px;font-weight:700;color:#1b1f27;">RELATED</div>
<div class="b" style="left:1419px;top:465px;width:2px;height:45px;background:#d6d7e1;"></div>
<div class="t" style="left:1114px;width:800px;text-align:center;top:475.5px;font-size:19.4px;line-height:25px;font-weight:700;color:#1b1f27;">QUESTIONS</div>
<div class="b" style="left:1606px;top:465px;width:2px;height:45px;background:#d6d7e1;"></div>
<div class="t" style="left:1352px;width:800px;text-align:center;top:475.5px;font-size:19.2px;line-height:25px;font-weight:700;color:#1b1f27;">LOW SEARCH VOLUME</div>
<div class="b" style="left:1938px;top:455px;width:359px;height:64px;border:3px solid #d4d7e2;border-radius:8px;background:#f9f9fb;"></div>
<div class="t" style="left:1962px;top:472.0px;font-size:25px;line-height:32px;font-weight:400;color:#8f98a3;">Search</div>
<svg class="b" style="left:2248px;top:472px;" width="30" height="30" viewBox="0 0 30 30" fill="none"><circle cx="12" cy="12" r="7.5" stroke="#9aa2ab" stroke-width="2.4"/><path d="M17.5 17.5 L24 24" stroke="#9aa2ab" stroke-width="2.6" stroke-linecap="round"/></svg>
<div class="b" style="left:2404px;top:455px;width:93px;height:64px;border:3px solid #d4d7e2;border-radius:8px;background:#f9f9fb;"></div>
<svg class="b" style="left:2421px;top:469px;" width="40" height="38" viewBox="0 0 40 38" fill="none"><path d="M6 28 L6 5 Q6 3 8 3 L22 3" stroke="#1b1f27" stroke-width="3"/><rect x="12" y="9" width="16" height="24" rx="2" stroke="#1b1f27" stroke-width="3"/></svg>
<svg class="b" style="left:2463px;top:481px;" width="18" height="12" viewBox="0 0 18 12" fill="none"><path d="M2.5 3 L9 9 L15.5 3" stroke="#1b1f27" stroke-width="2.6" stroke-linecap="round" stroke-linejoin="round"/></svg>
<div class="b" style="left:2512px;top:453px;width:94px;height:72px;background:#ff2600;border-radius:3px;"></div>
<div class="b" style="left:2518px;top:459px;width:82px;height:60px;background:#5a5279;"></div>
<svg class="b" style="left:2540px;top:471px;" width="38" height="38" viewBox="0 0 38 38" fill="none"><path d="M2.5 5.5 L35 5.5 M7.5 14 L30 14 M14.5 23 L23 23" stroke="#fff" stroke-width="3.6"/></svg>
<div class="b" style="left:2620px;top:455px;width:85px;height:64px;border:3px solid #d4d7e2;border-radius:8px;background:#f9f9fb;"></div>
<svg class="b" style="left:2646px;top:474px;" width="32" height="26" viewBox="0 0 32 26" fill="none"><rect x="1" y="1" width="8" height="23.5" fill="#161b24"/><rect x="12" y="1" width="8" height="23.5" fill="#161b24"/><rect x="23" y="1" width="8" height="23.5" fill="#161b24"/></svg>
<div class="b" style="left:2723px;top:455px;width:84px;height:64px;border:3px solid #d4d7e2;border-radius:8px;background:#f9f9fb;"></div>
<svg class="b" style="left:2749px;top:470px;" width="34" height="36" viewBox="0 0 34 36" fill="none"><path d="M16.5 1.5 L4 14 L11 14 L11 23 L22 23 L22 14 L29 14 Z" fill="#2c3558"/><rect x="4" y="28" width="25" height="3.6" fill="#2c3558"/></svg>
<div class="t" style="left:1106px;top:604.0px;font-size:24.6px;line-height:32px;font-weight:400;color:#2f3d4a;">Include:<span style="font-style:italic;font-weight:400;color:#5f7383;font-size:22px;position:relative;top:-7px;margin-left:5px;-webkit-text-stroke:0.6px #5f7383;">i</span></div>
<div class="b" style="left:1106px;top:645px;width:252px;height:65px;border:3px solid #d4d7e2;border-radius:9px;background:#f9f9fb;"></div>
<svg class="b" style="left:1315px;top:670px;" width="18" height="12" viewBox="0 0 18 12" fill="none"><path d="M2.5 3 L9 9 L15.5 3" stroke="#1b1f27" stroke-width="2.6" stroke-linecap="round" stroke-linejoin="round"/></svg>
<div class="t" style="left:1395px;top:604.0px;font-size:24.6px;line-height:32px;font-weight:400;color:#2f3d4a;">Exclude:<span style="font-style:italic;font-weight:400;color:#5f7383;font-size:22px;position:relative;top:-7px;margin-left:5px;-webkit-text-stroke:0.6px #5f7383;">i</span></div>
<div class="b" style="left:1395px;top:645px;width:252px;height:65px;border:3px solid #d4d7e2;border-radius:9px;background:#f9f9fb;"></div>
<svg class="b" style="left:1604px;top:670px;" width="18" height="12" viewBox="0 0 18 12" fill="none"><path d="M2.5 3 L9 9 L15.5 3" stroke="#1b1f27" stroke-width="2.6" stroke-linecap="round" stroke-linejoin="round"/></svg>
<div class="t" style="left:1685px;top:604.0px;font-size:25px;line-height:32px;font-weight:400;color:#2f3d4a;">Word count:</div>
<div class="b" style="left:1685px;top:645px;width:253px;height:65px;border:3px solid #d4d7e2;border-radius:9px;background:#f9f9fb;"></div>
<div class="b" style="left:1810px;top:647px;width:2px;height:16px;background:#d4d7e2;"></div>
<div class="b" style="left:1810px;top:692px;width:2px;height:16px;background:#d4d7e2;"></div>
<div class="b" style="left:1802px;top:677px;width:18px;height:2px;background:#1f2a44;"></div>
<div class="t" style="left:1733px;top:663.5px;font-size:23px;line-height:30px;font-weight:400;color:#1b1f27;">3</div>
<div class="t" style="left:1858px;top:663.5px;font-size:23px;line-height:30px;font-weight:400;color:#1b1f27;">4</div>
<div class="t" style="left:1974px;top:604.0px;font-size:25px;line-height:32px;font-weight:400;color:#2f3d4a;">Characters:</div>
<div class="b" style="left:1974px;top:645px;width:253px;height:65px;border:3px solid #d4d7e2;border-radius:9px;background:#f9f9fb;"></div>
<div class="b" style="left:2099px;top:647px;width:2px;height:16px;background:#d4d7e2;"></div>
<div class="b" style="left:2099px;top:692px;width:2px;height:16px;background:#d4d7e2;"></div>
<div class="b" style="left:2091px;top:677px;width:18px;height:2px;background:#1f2a44;"></div>
<div class="t" style="left:2265px;top:604.0px;font-size:24.5px;line-height:32px;font-weight:400;color:#2f3d4a;">Difficulty:<span style="font-style:italic;font-weight:400;color:#5f7383;font-size:22px;position:relative;top:-7px;margin-left:5px;-webkit-text-stroke:0.6px #5f7383;">i</span></div>
<div class="b" style="left:2265px;top:645px;width:253px;height:65px;border:3px solid #d4d7e2;border-radius:9px;background:#f9f9fb;"></div>
<div class="b" style="left:2390px;top:647px;width:2px;height:16px;background:#d4d7e2;"></div>
<div class="b" style="left:2390px;top:692px;width:2px;height:16px;background:#d4d7e2;"></div>
<div class="b" style="left:2382px;top:677px;width:18px;height:2px;background:#1f2a44;"></div>
<div class="t" style="left:2554px;top:604.0px;font-size:24.5px;line-height:32px;font-weight:400;color:#2f3d4a;">Search vol.:<span style="font-style:italic;font-weight:400;color:#5f7383;font-size:22px;position:relative;top:-7px;margin-left:5px;-webkit-text-stroke:0.6px #5f7383;">i</span></div>
<div class="b" style="left:2554px;top:645px;width:253px;height:65px;border:3px solid #d4d7e2;border-radius:9px;background:#f9f9fb;"></div>
<div class="b" style="left:2679px;top:647px;width:2px;height:16px;background:#d4d7e2;"></div>
<div class="b" style="left:2679px;top:692px;width:2px;height:16px;background:#d4d7e2;"></div>
<div class="b" style="left:2671px;top:677px;width:18px;height:2px;background:#1f2a44;"></div>
<div class="t" style="left:1106px;top:738.0px;font-size:24.6px;line-height:32px;font-weight:400;color:#2f3d4a;">Search intent:<span style="font-style:italic;font-weight:400;color:#5f7383;font-size:22px;position:relative;top:-7px;margin-left:5px;-webkit-text-stroke:0.6px #5f7383;">i</span></div>
<div class="b" style="left:1106px;top:778px;width:252px;height:65px;border:3px solid #d4d7e2;border-radius:9px;background:#f9f9fb;"></div>
<svg class="b" style="left:1315px;top:803px;" width="18" height="12" viewBox="0 0 18 12" fill="none"><path d="M2.5 9 L9 3 L15.5 9" stroke="#1b1f27" stroke-width="2.6" stroke-linecap="round" stroke-linejoin="round"/></svg>
<div class="t" style="left:1395px;top:738.5px;font-size:24px;line-height:31px;font-weight:400;color:#2f3d4a;">SERP features:<span style="font-style:italic;font-weight:400;color:#5f7383;font-size:22px;position:relative;top:-7px;margin-left:5px;-webkit-text-stroke:0.6px #5f7383;">i</span></div>
<div class="b" style="left:1395px;top:778px;width:252px;height:65px;border:3px solid #d4d7e2;border-radius:9px;background:#f9f9fb;"></div>
<svg class="b" style="left:1604px;top:803px;" width="18" height="12" viewBox="0 0 18 12" fill="none"><path d="M2.5 3 L9 9 L15.5 3" stroke="#1b1f27" stroke-width="2.6" stroke-linecap="round" stroke-linejoin="round"/></svg>
<div class="t" style="left:1685px;top:738.0px;font-size:25px;line-height:32px;font-weight:400;color:#2f3d4a;">CPC:<span style="font-style:italic;font-weight:400;color:#5f7383;font-size:22px;position:relative;top:-7px;margin-left:5px;-webkit-text-stroke:0.6px #5f7383;">i</span></div>
<div class="b" style="left:1685px;top:778px;width:253px;height:65px;border:3px solid #d4d7e2;border-radius:9px;background:#f9f9fb;"></div>
<div class="b" style="left:1810px;top:780px;width:2px;height:16px;background:#d4d7e2;"></div>
<div class="b" style="left:1810px;top:825px;width:2px;height:16px;background:#d4d7e2;"></div>
<div class="b" style="left:1802px;top:810px;width:18px;height:2px;background:#1f2a44;"></div>
<div class="t" style="left:1974px;top:738.0px;font-size:24.5px;line-height:32px;font-weight:400;color:#2f3d4a;">Competition:<span style="font-style:italic;font-weight:400;color:#5f7383;font-size:22px;position:relative;top:-7px;margin-left:5px;-webkit-text-stroke:0.6px #5f7383;">i</span></div>
<div class="b" style="left:1974px;top:778px;width:253px;height:65px;border:3px solid #d4d7e2;border-radius:9px;background:#f9f9fb;"></div>
<div class="b" style="left:2099px;top:780px;width:2px;height:16px;background:#d4d7e2;"></div>
<div class="b" style="left:2099px;top:825px;width:2px;height:16px;background:#d4d7e2;"></div>
<div class="b" style="left:2091px;top:810px;width:18px;height:2px;background:#1f2a44;"></div>
<div class="b" style="left:1368px;top:890px;width:252px;height:63px;border:3px solid #d4d7e2;border-radius:9px;background:#f9f9fb;"></div>
<svg class="b" style="left:1577px;top:914px;" width="18" height="12" viewBox="0 0 18 12" fill="none"><path d="M2.5 3 L9 9 L15.5 3" stroke="#1b1f27" stroke-width="2.6" stroke-linecap="round" stroke-linejoin="round"/></svg>
<div class="b" style="left:2362px;top:890px;width:198px;height:64px;border:3px solid #d4d7e2;border-radius:8px;background:#fff;"></div>
<svg class="b" style="left:2388px;top:906px;" width="32" height="32" viewBox="0 0 32 32" fill="none"><path d="M4 4 L27 27 M27 4 L4 27" stroke="#1b1f27" stroke-width="3.2"/></svg>
<div class="t" style="left:2432px;top:910.0px;font-size:18.3px;line-height:24px;font-weight:700;color:#1b1f27;">CLEAR ALL</div>
<div class="b" style="left:2577px;top:889px;width:232px;height:69px;background:#ff2600;border-radius:3px;box-shadow:0 6px 14px rgba(0,0,0,0.10);"></div>
<div class="b" style="left:2583px;top:895px;width:220px;height:57px;background:#1b76d3;"></div>
<svg class="b" style="left:2600px;top:906px;" width="36" height="32" viewBox="0 0 36 32" fill="none"><path d="M3 17 L12.5 26.5 L32 5" stroke="#fff" stroke-width="3.4"/></svg>
<div class="t" style="left:2648px;top:910.0px;font-size:18.4px;line-height:24px;font-weight:700;color:#ffffff;">APPLY FILTERS</div>
<svg class="b" style="left:2640px;top:730px;filter:drop-shadow(0 2px 2px rgba(0,0,0,0.15));" width="80" height="150" viewBox="0 0 80 150" fill="none"><path d="M37 7 Q39.5 5 42 7 L44.5 70 Q45.5 85 48.5 94 L66 90 L40 145 L12 92 L31 94 Q34 85 35 70 Z" fill="#ff2600"/></svg>
<div class="b" style="left:1069px;top:990px;width:1774px;height:101px;background:#f8f9fb;border-top:2px solid #eef0f4;"></div>
<div class="b" style="left:1069px;top:1091px;width:1774px;height:76px;background:#f3f6fb;"></div>
<div class="b" style="left:1069px;top:1167px;width:1774px;height:74px;background:#f9f9fb;"></div>
<div class="b" style="left:1069px;top:1241px;width:1774px;height:75px;background:#ffffff;"></div>
<div class="b" style="left:1069px;top:1316px;width:1774px;height:76px;background:#f9f9fb;"></div>
<div class="b" style="left:1069px;top:1240px;width:1774px;height:3px;background:#eef0f4;"></div>
<div class="b" style="left:1069px;top:1315px;width:1774px;height:3px;background:#eef0f4;"></div>
<div class="b" style="left:1069px;top:1089px;width:1774px;height:3px;background:#cfe0f4;"></div>
<div class="b" style="left:1069px;top:1166px;width:1774px;height:3px;background:#cfe0f4;"></div>
<div class="b" style="left:1896px;top:993px;width:3px;height:96px;background:#eef0f4;"></div>
<div class="b" style="left:1896px;top:1093px;width:3px;height:73px;background:#e8edf5;"></div>
<div class="b" style="left:1896px;top:1169px;width:3px;height:71px;background:#eef0f4;"></div>
<div class="b" style="left:1896px;top:1243px;width:3px;height:72px;background:#eef0f4;"></div>
<div class="b" style="left:1896px;top:1318px;width:3px;height:73px;background:#eef0f4;"></div>
<div class="b" style="left:2140px;top:993px;width:3px;height:96px;background:#eef0f4;"></div>
<div class="b" style="left:2140px;top:1093px;width:3px;height:73px;background:#e8edf5;"></div>
<div class="b" style="left:2140px;top:1169px;width:3px;height:71px;background:#eef0f4;"></div>
<div class="b" style="left:2140px;top:1243px;width:3px;height:72px;background:#eef0f4;"></div>
<div class="b" style="left:2140px;top:1318px;width:3px;height:73px;background:#eef0f4;"></div>
<div class="b" style="left:2383px;top:993px;width:3px;height:96px;background:#eef0f4;"></div>
<div class="b" style="left:2383px;top:1093px;width:3px;height:73px;background:#e8edf5;"></div>
<div class="b" style="left:2383px;top:1169px;width:3px;height:71px;background:#eef0f4;"></div>
<div class="b" style="left:2383px;top:1243px;width:3px;height:72px;background:#eef0f4;"></div>
<div class="b" style="left:2383px;top:1318px;width:3px;height:73px;background:#eef0f4;"></div>
<div class="b" style="left:2563px;top:993px;width:3px;height:96px;background:#eef0f4;"></div>
<div class="b" style="left:2563px;top:1093px;width:3px;height:73px;background:#e8edf5;"></div>
<div class="b" style="left:2563px;top:1169px;width:3px;height:71px;background:#eef0f4;"></div>
<div class="b" style="left:2563px;top:1243px;width:3px;height:72px;background:#eef0f4;"></div>
<div class="b" style="left:2563px;top:1318px;width:3px;height:73px;background:#eef0f4;"></div>
<div class="b" style="left:2805px;top:993px;width:3px;height:96px;background:#eef0f4;"></div>
<div class="b" style="left:2805px;top:1093px;width:3px;height:73px;background:#e8edf5;"></div>
<div class="b" style="left:2805px;top:1169px;width:3px;height:71px;background:#eef0f4;"></div>
<div class="b" style="left:2805px;top:1243px;width:3px;height:72px;background:#eef0f4;"></div>
<div class="b" style="left:2805px;top:1318px;width:3px;height:73px;background:#eef0f4;"></div>
<div class="t" style="left:1618px;width:800px;text-align:center;top:1027.5px;font-size:19.5px;line-height:25px;font-weight:700;color:#566470;">DIFFICULTY</div>
<div class="t" style="right:533px;top:1027.5px;font-size:19.5px;line-height:25px;font-weight:700;color:#566470;">SEARCH VOL.</div>
<svg class="b" style="left:2359px;top:1032px;" width="16" height="14" viewBox="0 0 16 14" fill="none"><path d="M3 4 L8 9 L13 4" stroke="#566470" stroke-width="2.2" stroke-linecap="round" stroke-linejoin="round"/></svg>
<div class="t" style="left:2406px;top:1027.5px;font-size:19.5px;line-height:25px;font-weight:700;color:#566470;">TREND</div>
<div class="t" style="left:2586px;top:1027.5px;font-size:19.5px;line-height:25px;font-weight:700;color:#566470;">SEARCH INTENT</div>
<div class="t" style="left:2829px;top:1027.5px;font-size:19.5px;line-height:25px;font-weight:700;color:#566470;clip-path:inset(0 0 0 0);">SE</div>
<div class="b" style="left:1106px;top:1027px;width:26px;height:26px;border:3px solid #161b24;border-radius:3px;"></div>
<div class="b" style="left:1106px;top:1116px;width:26px;height:26px;border:3px solid #161b24;border-radius:3px;"></div>
<div class="b" style="left:1106px;top:1191px;width:26px;height:26px;border:3px solid #161b24;border-radius:3px;"></div>
<div class="b" style="left:1106px;top:1268px;width:26px;height:26px;border:3px solid #161b24;border-radius:3px;"></div>
<svg class="b" style="left:1150px;top:1265px;" width="32" height="32" viewBox="0 0 32 32" fill="none"><circle cx="16" cy="16" r="14" stroke="#68737f" stroke-width="2.4"/><path d="M16 9 L16 23 M9 16 L23 16" stroke="#68737f" stroke-width="2.4"/></svg>
<div class="t" style="left:1196px;top:1264.5px;font-size:25.2px;line-height:33px;font-weight:400;color:#1a6fd6;">mobile app developer</div>
<div class="b" style="left:1106px;top:1343px;width:26px;height:26px;border:3px solid #161b24;border-radius:3px;"></div>
<svg class="b" style="left:1150px;top:1340px;" width="32" height="32" viewBox="0 0 32 32" fill="none"><circle cx="16" cy="16" r="14" stroke="#68737f" stroke-width="2.4"/><path d="M16 9 L16 23 M9 16 L23 16" stroke="#68737f" stroke-width="2.4"/></svg>
<div class="t" style="left:1196px;top:1339.5px;font-size:25.2px;line-height:33px;font-weight:400;color:#1a6fd6;">apps development</div>
<div class="b" style="left:1979px;top:1107px;width:85px;height:43px;border:2px solid #f2cf44;border-radius:7px;background:#fff;"></div>
<div class="b" style="left:1996px;top:1124px;width:10px;height:10px;border-radius:50%;background:#f5c400;"></div>
<div class="t" style="left:2019px;top:1114.0px;font-size:26px;line-height:34px;font-weight:400;color:#1b1f27;">52</div>
<div class="t" style="right:527px;top:1114.5px;font-size:25.5px;line-height:33px;font-weight:400;color:#1b1f27;">5.4K</div>
<div class="b" style="left:1979px;top:1182px;width:85px;height:43px;border:2px solid #f2cf44;border-radius:7px;background:#fff;"></div>
<div class="b" style="left:1996px;top:1199px;width:10px;height:10px;border-radius:50%;background:#f5c400;"></div>
<div class="t" style="left:2019px;top:1189.0px;font-size:26px;line-height:34px;font-weight:400;color:#1b1f27;">53</div>
<div class="t" style="right:527px;top:1189.5px;font-size:25.5px;line-height:33px;font-weight:400;color:#1b1f27;">9.9K</div>
<div class="b" style="left:1979px;top:1257px;width:85px;height:43px;border:2px solid #f2cf44;border-radius:7px;background:#fff;"></div>
<div class="b" style="left:1996px;top:1274px;width:10px;height:10px;border-radius:50%;background:#f5c400;"></div>
<div class="t" style="left:2019px;top:1264.0px;font-size:26px;line-height:34px;font-weight:400;color:#1b1f27;">50</div>
<div class="t" style="right:527px;top:1264.5px;font-size:25.5px;line-height:33px;font-weight:400;color:#1b1f27;">9.9K</div>
<div class="b" style="left:1979px;top:1333px;width:85px;height:43px;border:2px solid #f2cf44;border-radius:7px;background:#fff;"></div>
<div class="b" style="left:1996px;top:1350px;width:10px;height:10px;border-radius:50%;background:#f5c400;"></div>
<div class="t" style="left:2019px;top:1340.0px;font-size:26px;line-height:34px;font-weight:400;color:#1b1f27;">54</div>
<div class="t" style="right:527px;top:1340.5px;font-size:25.5px;line-height:33px;font-weight:400;color:#1b1f27;">8.1K</div>
<svg class="b" style="left:2400px;top:1095px;" width="160" height="300" viewBox="0 0 160 300" fill="none"><polygon points="2407.0,1148.5 2407.0,1133.3 2419.7,1133.3 2431.3,1141.0 2443.8,1122.5 2468.6,1122.5 2480.6,1133.3 2493.1,1122.5 2505.2,1122.5 2517.2,1133.3 2529.3,1133.3 2543.7,1110.0 2543.7,1148.5" fill="#e4eef9" transform="translate(-2400 -1095)"/><polyline points="2407.0,1133.3 2419.7,1133.3 2431.3,1141.0 2443.8,1122.5 2468.6,1122.5 2480.6,1133.3 2493.1,1122.5 2505.2,1122.5 2517.2,1133.3 2529.3,1133.3 2543.7,1110.0" stroke="#1a6fd6" stroke-width="2.6" stroke-linejoin="round" transform="translate(-2400 -1095)"/></svg>
<svg class="b" style="left:2400px;top:1095px;" width="160" height="300" viewBox="0 0 160 300" fill="none"><polygon points="2407.0,1224.8 2407.0,1216.9 2419.7,1216.9 2431.8,1203.1 2455.8,1203.1 2468.6,1186.3 2481.1,1186.3 2493.1,1203.1 2505.2,1216.9 2517.2,1203.1 2529.3,1216.9 2543.7,1216.9 2543.7,1224.8" fill="#e4eef9" transform="translate(-2400 -1095)"/><polyline points="2407.0,1216.9 2419.7,1216.9 2431.8,1203.1 2455.8,1203.1 2468.6,1186.3 2481.1,1186.3 2493.1,1203.1 2505.2,1216.9 2517.2,1203.1 2529.3,1216.9 2543.7,1216.9" stroke="#1a6fd6" stroke-width="2.6" stroke-linejoin="round" transform="translate(-2400 -1095)"/></svg>
<svg class="b" style="left:2400px;top:1095px;" width="160" height="300" viewBox="0 0 160 300" fill="none"><polygon points="2407.0,1300.8 2407.0,1292.9 2419.7,1292.9 2431.8,1279.2 2455.8,1279.2 2468.6,1262.4 2481.1,1262.4 2493.1,1279.2 2505.2,1292.9 2517.2,1279.2 2529.3,1292.9 2543.7,1292.9 2543.7,1300.8" fill="#e4eef9" transform="translate(-2400 -1095)"/><polyline points="2407.0,1292.9 2419.7,1292.9 2431.8,1279.2 2455.8,1279.2 2468.6,1262.4 2481.1,1262.4 2493.1,1279.2 2505.2,1292.9 2517.2,1279.2 2529.3,1292.9 2543.7,1292.9" stroke="#1a6fd6" stroke-width="2.6" stroke-linejoin="round" transform="translate(-2400 -1095)"/></svg>
<svg class="b" style="left:2400px;top:1095px;" width="160" height="300" viewBox="0 0 160 300" fill="none"><polygon points="2407.0,1375 2407.0,1337.2 2419.7,1368.0 2431.8,1368.0 2443.8,1337.2 2505.2,1337.2 2517.2,1368.0 2543.7,1368.0 2543.7,1375" fill="#e4eef9" transform="translate(-2400 -1095)"/><polyline points="2407.0,1337.2 2419.7,1368.0 2431.8,1368.0 2443.8,1337.2 2505.2,1337.2 2517.2,1368.0 2543.7,1368.0" stroke="#1a6fd6" stroke-width="2.6" stroke-linejoin="round" transform="translate(-2400 -1095)"/></svg>
<div class="b" style="left:2586px;top:1111px;width:36px;height:36px;background:#d3e3f5;border-radius:7px;"></div>
<div class="t" style="left:2204px;width:800px;text-align:center;top:1117.5px;font-size:19px;line-height:25px;font-weight:700;color:#1f3b63;">I</div>
<div class="b" style="left:2586px;top:1187px;width:36px;height:36px;background:#d3e3f5;border-radius:7px;"></div>
<div class="t" style="left:2204px;width:800px;text-align:center;top:1193.5px;font-size:19px;line-height:25px;font-weight:700;color:#1f3b63;">I</div>
<div class="b" style="left:2629px;top:1187px;width:36px;height:36px;background:#f9dcdc;border-radius:7px;"></div>
<div class="t" style="left:2247px;width:800px;text-align:center;top:1193.5px;font-size:19px;line-height:25px;font-weight:700;color:#8a2323;">N</div>
<div class="b" style="left:2586px;top:1263px;width:36px;height:36px;background:#d3e3f5;border-radius:7px;"></div>
<div class="t" style="left:2204px;width:800px;text-align:center;top:1269.5px;font-size:19px;line-height:25px;font-weight:700;color:#1f3b63;">I</div>
<div class="b" style="left:2586px;top:1338px;width:36px;height:36px;background:#e6d7ee;border-radius:7px;"></div>
<div class="t" style="left:2204px;width:800px;text-align:center;top:1344.5px;font-size:19px;line-height:25px;font-weight:700;color:#4b1f66;">L</div>
<div class="b" style="left:2629px;top:1338px;width:36px;height:36px;background:#fde9cf;border-radius:7px;"></div>
<div class="t" style="left:2247px;width:800px;text-align:center;top:1344.5px;font-size:19px;line-height:25px;font-weight:700;color:#8a4f0d;">C</div>
<div class="b" style="left:2828px;top:1118px;width:15px;height:24px;overflow:hidden;"><svg width="24" height="24" viewBox="0 0 24 24"><path d="M12 1 L15 9 L23 9 L16.5 14 L19 22 L12 17 L5 22 L7.5 14 L1 9 L9 9 Z" fill="#161b24"/></svg></div>
<div class="b" style="left:2834px;top:1192px;width:9px;height:24px;overflow:hidden;background:repeating-linear-gradient(#161b24 0 4px, transparent 4px 7px);"></div>
<div class="b" style="left:2828px;top:1268px;width:15px;height:24px;overflow:hidden;"><svg width="24" height="24" viewBox="0 0 24 24"><path d="M12 1 L15 9 L23 9 L16.5 14 L19 22 L12 17 L5 22 L7.5 14 L1 9 L9 9 Z" fill="#161b24"/></svg></div>
<div class="b" style="left:2834px;top:1343px;width:9px;height:26px;overflow:hidden;"><div style="width:22px;height:26px;border-radius:50%;background:#161b24;"></div></div>
<div class="b" style="left:1106px;top:837px;width:455px;height:442px;background:#ff2600;border-radius:3px;box-shadow:0 8px 16px rgba(0,0,0,0.12);"></div>
<div class="b" style="left:1112px;top:843px;width:443px;height:430px;background:#fff;"></div>
<div class="b" style="left:1112px;top:919px;width:443px;height:2px;background:#e3e5ec;"></div>
<div class="b" style="left:1112px;top:992px;width:443px;height:73px;background:#d5d6e2;"></div>
<div class="b" style="left:1138px;top:870px;width:26px;height:26px;border:3px solid #161b24;border-radius:3px;"></div>
<div class="t" style="left:1188px;top:866.5px;font-size:25.5px;line-height:33px;font-weight:400;color:#161b24;">Select All</div>
<div class="b" style="left:1138px;top:944px;width:26px;height:26px;border:3px solid #161b24;border-radius:3px;"></div>
<div class="t" style="left:1188px;top:940.5px;font-size:25.5px;line-height:33px;font-weight:400;color:#161b24;">Informational</div>
<div class="b" style="left:1138px;top:1015px;width:26px;height:26px;border:3px solid #161b24;border-radius:3px;"></div>
<div class="t" style="left:1188px;top:1011.5px;font-size:25.5px;line-height:33px;font-weight:400;color:#161b24;">Navigational</div>
<div class="b" style="left:1138px;top:1088px;width:26px;height:26px;border:3px solid #161b24;border-radius:3px;"></div>
<div class="t" style="left:1188px;top:1084.5px;font-size:25.5px;line-height:33px;font-weight:400;color:#161b24;">Transactional</div>
<div class="b" style="left:1138px;top:1159px;width:26px;height:26px;border:3px solid #161b24;border-radius:3px;"></div>
<div class="t" style="left:1188px;top:1155.5px;font-size:25.5px;line-height:33px;font-weight:400;color:#161b24;">Commercial</div>
<div class="b" style="left:1138px;top:1232px;width:26px;height:26px;border:3px solid #161b24;border-radius:3px;"></div>
<div class="t" style="left:1188px;top:1228.5px;font-size:25.5px;line-height:33px;font-weight:400;color:#161b24;">Local</div>
<div class="b" style="left:2720px;top:1187px;width:115px;height:115px;border-radius:50%;background:#0a6cfb;box-shadow:0 16px 40px rgba(30,40,60,0.16);"></div>
<div class="b" style="left:2748px;top:1227px;width:58px;height:29px;background:#fff;border-radius:15px;"></div>
<svg class="b" style="left:2782px;top:1261px;" width="14" height="14" viewBox="0 0 14 14" fill="none"><path d="M1 1 L12 1 L12 12 Z" fill="#fff"/></svg>
<div class="b" style="left:2843px;top:410px;width:37px;height:979px;background:#f1f2f6;"></div>
<div class="b" style="left:528px;top:1318px;width:2352px;height:71px;background:linear-gradient(rgba(0,0,0,0), rgba(20,25,40,0.06));pointer-events:none;"></div>
<svg class="b" style="left:0px;top:1377px;" width="12" height="12" viewBox="0 0 12 12" fill="none"><path d="M0 0 L0 12 L12 12 A12 12 0 0 1 0 0 Z" fill="#000"/></svg>
<svg class="b" style="left:2868px;top:1377px;" width="12" height="12" viewBox="0 0 12 12" fill="none"><path d="M12 0 L12 12 L0 12 A12 12 0 0 0 12 0 Z" fill="#000"/></svg>
</body></html>
